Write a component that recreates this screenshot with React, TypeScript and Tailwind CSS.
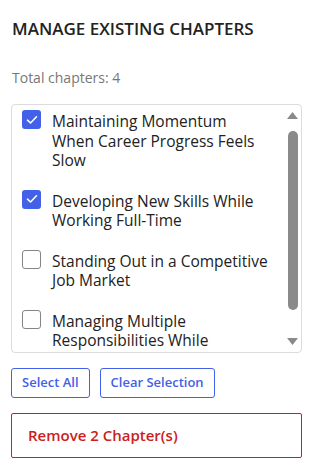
import React from "react";

const chapters = [
  { title: "Maintaining Momentum When Career Progress Feels Slow", checked: true },
  { title: "Developing New Skills While Working Full-Time", checked: true },
  { title: "Standing Out in a Competitive Job Market", checked: false },
  { title: "Managing Multiple Responsibilities While Studying", checked: false },
];

function Box({ checked }: { checked: boolean }) {
  if (checked) {
    return (
      <span className="mt-[-2px] flex h-[19px] w-[19px] shrink-0 items-center justify-center rounded-[3px] bg-[#4361e8]">
        <svg width="12" height="10" viewBox="0 0 12 10" fill="none">
          <path d="M1.5 5.2 L4.5 8 L10.5 1.8" stroke="white" strokeWidth="1.6" strokeLinecap="round" strokeLinejoin="round" />
        </svg>
      </span>
    );
  }
  return <span className="mt-[-2px] h-[19px] w-[19px] shrink-0 rounded-[3px] border border-[#858585] bg-white" />;
}

export default function App() {
  return (
    <div className="h-[472px] w-[313px] bg-white px-[11px] font-['Open_Sans',sans-serif]">
      <h2 className="pl-px pt-[17px] text-[17px] font-semibold leading-[24px] text-[#222]">MANAGE EXISTING CHAPTERS</h2>
      <p className="mt-[27px] pl-px text-[14px] leading-[20px] text-[#777]">Total chapters: 4</p>
      <div className="mt-[16px] flex h-[249px] rounded-[4px] border border-[#dcdcdc]">
        <div className="flex flex-1 flex-col gap-[21px] overflow-hidden pl-[10px] pt-[7px]">
          {chapters.map((c) => (
            <label key={c.title} className="flex items-start gap-[11px]">
              <Box checked={c.checked} />
              <span className="w-[219px] text-[15.5px] leading-[19.5px] text-[#222]">{c.title}</span>
            </label>
          ))}
        </div>
        <div className="flex w-[17px] flex-col items-center pt-[7px] pb-[7px]">
          <svg width="11" height="7" viewBox="0 0 11 7"><path d="M5.5 0 L11 7 L0 7 Z" fill="#8a8a8a" /></svg>
          <div className="mt-[12px] h-[179px] w-[10px] rounded-full bg-[#8a8a8a]" />
          <div className="flex-1" />
          <svg width="11" height="7" viewBox="0 0 11 7"><path d="M0 0 L11 0 L5.5 7 Z" fill="#8a8a8a" /></svg>
        </div>
      </div>
      <div className="mt-[15px] flex gap-[10px]">
        <button className="h-[30px] rounded-[3px] border border-[#4361e8] px-[10px] text-[13px] font-semibold text-[#4361e8]">Select All</button>
        <button className="h-[30px] rounded-[3px] border border-[#4361e8] px-[10px] text-[13px] font-semibold text-[#4361e8]">Clear Selection</button>
      </div>
      <button className="mt-[15px] flex h-[45px] w-full items-center rounded-[2px] border border-[#cc2020] pl-[16px] text-[15px] font-semibold text-[#cc2020]">
        Remove 2 Chapter(s)
      </button>
    </div>
  );
}
